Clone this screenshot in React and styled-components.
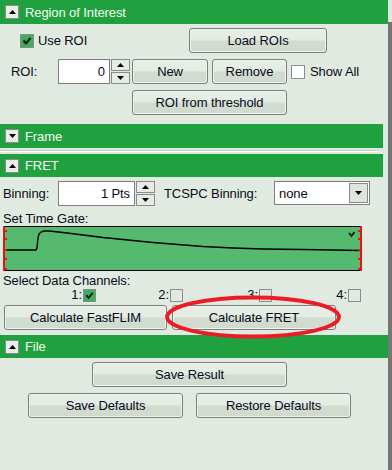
import React from "react";
import styled, { createGlobalStyle } from "styled-components";

const Global = createGlobalStyle`
  html, body { margin: 0; padding: 0; background: #e0eae0; }
  body { font-family: "Liberation Sans", Arial, sans-serif; }
  * { box-sizing: border-box; }
`;

const Window = styled.div`
  width: 392px;
  height: 470px;
  display: flex;
  background: #e0eae0;
  overflow: hidden;
`;

const Panel = styled.div`
  position: relative;
  flex: 1;
  display: flex;
  flex-direction: column;
  font-size: 13px;
  letter-spacing: -0.1px;
  color: #0a0a1a;
`;

const ScrollStrip = styled.div`
  width: 4px;
  display: flex;
  flex-direction: column;
  background: #767676;
  &::before {
    content: "";
    height: 22px;
    background: #e4e4e4;
  }
`;

const Header = styled.div`
  height: ${(p) => p.$h || 24}px;
  margin-top: ${(p) => p.$mt || 0}px;
  margin-right: ${(p) => p.$mr || 0}px;
  background: #20a13f;
  display: flex;
  align-items: center;
  padding-left: 5px;
  gap: 6px;
  color: #f4fff0;
  font-size: 13px;
`;

const Toggle = styled.div`
  width: 14px;
  height: 14px;
  background: #ebebeb;
  border: 1px solid #8a8a8a;
  display: flex;
  align-items: center;
  justify-content: center;
`;

const Row = styled.div`
  display: flex;
  align-items: center;
  height: ${(p) => p.$h || 25}px;
  margin-top: ${(p) => p.$mt || 0}px;
  padding-left: ${(p) => p.$pl || 0}px;
  gap: ${(p) => p.$gap || 0}px;
`;

const Cell = styled.div`
  width: ${(p) => p.$w}px;
  flex: none;
  display: flex;
  align-items: center;
  gap: ${(p) => p.$gap || 0}px;
  padding-left: ${(p) => p.$pl || 0}px;
`;

const Button = styled.div`
  width: ${(p) => p.$w}px;
  height: 25px;
  flex: none;
  border: 1px solid #7c7f7c;
  border-radius: 3px;
  background: linear-gradient(to bottom, #e8efe7 0%, #e4ebe3 48%, #d2dcd1 52%, #d0dacf 100%);
  box-shadow: inset 0 0 0 1px #eef3ed;
  display: flex;
  align-items: center;
  justify-content: center;
  padding-bottom: 1px;
`;

const CheckBox = styled.div`
  width: ${(p) => p.$s || 14}px;
  height: ${(p) => p.$s || 14}px;
  flex: none;
  border: 1px solid #8c8c8c;
  background: ${(p) => (p.$on ? "#3fae5c" : p.$white ? "#ffffff" : "transparent")};
  display: flex;
  align-items: center;
  justify-content: center;
`;

const SpinBox = styled.div`
  display: flex;
  gap: 1px;
  flex: none;
`;

const Field = styled.div`
  width: ${(p) => p.$w}px;
  height: 25px;
  background: #ffffff;
  border: 1px solid #7e7e7e;
  display: flex;
  align-items: center;
  justify-content: flex-end;
  padding-right: 4px;
`;

const SpinButtons = styled.div`
  width: 19px;
  display: flex;
  flex-direction: column;
  gap: 1px;
`;

const SpinBtn = styled.div`
  height: 12px;
  border: 1px solid #8a8a8a;
  background: #e6ece5;
  display: flex;
  align-items: center;
  justify-content: center;
`;

const Select = styled.div`
  width: 96px;
  height: 24px;
  flex: none;
  background: #ffffff;
  border: 1px solid #7e7e7e;
  display: flex;
  align-items: center;
  justify-content: space-between;
  padding: 1px 1px 1px 4px;
`;

const SelectBtn = styled.div`
  width: 19px;
  height: 20px;
  border: 1px solid #8a8a8a;
  background: #dfe5de;
  display: flex;
  align-items: center;
  justify-content: center;
`;

const Separator = styled.div`
  margin: 2px 9px 2px 0;
  height: 2px;
  border-top: 1px solid #c3cbc2;
  border-bottom: 1px solid #ffffff;
`;

const Label = styled.div`
  height: ${(p) => p.$h || 15}px;
  line-height: ${(p) => p.$h || 15}px;
  margin-top: ${(p) => p.$mt || 0}px;
  padding-left: 3px;
`;

const ChartBox = styled.div`
  margin-left: 3px;
  width: 359px;
  height: 45px;
  flex: none;
`;

const Channels = styled.div`
  display: grid;
  grid-template-columns: 96px 87px 89px 89px;
  height: 14px;
  align-items: center;
`;

const Channel = styled.div`
  display: flex;
  justify-content: flex-end;
  align-items: center;
  gap: 1px;
  line-height: 14px;
`;

const CalcRow = styled.div`
  position: relative;
  display: flex;
  gap: 5px;
  margin-top: 3px;
  padding-left: 4px;
  height: 25px;
`;

const Annotation = styled.svg`
  position: absolute;
  left: 163px;
  top: -10px;
  pointer-events: none;
`;

const Center = styled.div`
  display: flex;
  gap: ${(p) => p.$gap || 0}px;
  padding-left: ${(p) => p.$pl || 0}px;
  margin-top: ${(p) => p.$mt || 0}px;
`;

const Up = () => (
  <svg width="7" height="4" viewBox="0 0 7 4">
    <path d="M0 4 L3.5 0 L7 4 Z" fill="#000" />
  </svg>
);
const Down = () => (
  <svg width="7" height="4" viewBox="0 0 7 4">
    <path d="M0 0 L3.5 4 L7 0 Z" fill="#000" />
  </svg>
);
const Tick = ({ s = 14 }) => (
  <svg width={s - 2} height={s - 2} viewBox="0 0 12 12">
    <path d="M2.5 5.5 L5 8.5 L9.5 3" fill="none" stroke="#0a1a0a" strokeWidth="2" />
  </svg>
);

const curve = [
  [1, 24], [33, 24], [34, 22], [35, 12], [36, 8], [38, 6], [41, 5], [46, 5],
  [60, 6.5], [80, 9], [100, 11.5], [125, 14], [150, 16.5], [175, 18.5], [200, 20.5],
  [230, 22], [260, 23], [300, 23.5], [330, 24], [357, 24.5],
];
const ticks = [4, 12, 23, 32, 42];

const Chart = () => (
  <ChartBox>
    <svg width="359" height="45" viewBox="0 0 359 45">
      <rect x="0" y="0" width="359" height="45" fill="#55b96f" />
      <rect x="0.5" y="0.5" width="358" height="44" fill="none" stroke="#000" />
      <polyline
        points={curve.map((p) => p.join(",")).join(" ")}
        fill="none"
        stroke="#000"
        strokeWidth="1.4"
      />
      <path d="M346 7 L348.5 10 L351.5 6" fill="none" stroke="#000" strokeWidth="1.5" />
      <rect x="0" y="0" width="2" height="45" fill="#ee1111" />
      <rect x="357" y="0" width="2" height="45" fill="#ee1111" />
      {ticks.map((t) => (
        <g key={t}>
          <rect x="2" y={t} width="2" height="2" fill="#ee1111" />
          <rect x="355" y={t} width="2" height="2" fill="#ee1111" />
        </g>
      ))}
    </svg>
  </ChartBox>
);

export default function App() {
  return (
    <>
      <Global />
      <Window>
        <Panel>
          <Header>
            <Toggle><Up /></Toggle>
            Region of Interest
          </Header>

          <Row $mt={4}>
            <Cell $w={189} $pl={20} $gap={4}>
              <CheckBox $on><Tick /></CheckBox>
              Use ROI
            </Cell>
            <Button $w={138}>Load ROIs</Button>
          </Row>

          <Row $mt={6}>
            <Cell $w={58} $pl={11}>ROI:</Cell>
            <SpinBox>
              <Field $w={52}>0</Field>
              <SpinButtons>
                <SpinBtn><Up /></SpinBtn>
                <SpinBtn><Down /></SpinBtn>
              </SpinButtons>
            </SpinBox>
            <Cell $w={2} />
            <Button $w={76}>New</Button>
            <Cell $w={4} />
            <Button $w={75}>Remove</Button>
            <Cell $w={4} />
            <CheckBox $white />
            <Cell $w={5} />
            Show All
          </Row>

          <Row $mt={6} $pl={132}>
            <Button $w={155}>ROI from threshold</Button>
          </Row>

          <Header $mt={9} $mr={5}>
            <Toggle><Down /></Toggle>
            Frame
          </Header>
          <Separator />
          <Header $h={23} $mr={5}>
            <Toggle><Up /></Toggle>
            FRET
          </Header>

          <Row $mt={4} $h={24}>
            <Cell $w={58} $pl={3}>Binning:</Cell>
            <SpinBox>
              <Field $w={77}>1 Pts</Field>
              <SpinButtons>
                <SpinBtn><Up /></SpinBtn>
                <SpinBtn><Down /></SpinBtn>
              </SpinButtons>
            </SpinBox>
            <Cell $w={119} $pl={9}>TCSPC Binning:</Cell>
            <Select>
              none
              <SelectBtn><Down /></SelectBtn>
            </Select>
          </Row>

          <Label $mt={6}>Set Time Gate:</Label>
          <Chart />
          <Label $mt={3} $h={14}>Select Data Channels:</Label>
          <Channels>
            <Channel>1:<CheckBox $s={13} $on><Tick s={13} /></CheckBox></Channel>
            <Channel>2:<CheckBox $s={13} /></Channel>
            <Channel>3:<CheckBox $s={13} /></Channel>
            <Channel>4:<CheckBox $s={13} /></Channel>
          </Channels>

          <CalcRow>
            <Button $w={163}>Calculate FastFLIM</Button>
            <Button $w={164}>Calculate FRET</Button>
            <Annotation width="182" height="46" viewBox="0 0 182 46">
              <ellipse cx="90" cy="22" rx="86" ry="19.5" fill="none" stroke="#ec1b24" strokeWidth="3.8" />
            </Annotation>
          </CalcRow>

          <Header $mt={5} $h={23}>
            <Toggle><Up /></Toggle>
            File
          </Header>

          <Center $pl={92} $mt={4}>
            <Button $w={195}>Save Result</Button>
          </Center>
          <Center $pl={28} $mt={6} $gap={13}>
            <Button $w={155}>Save Defaults</Button>
            <Button $w={155}>Restore Defaults</Button>
          </Center>
        </Panel>
        <ScrollStrip />
      </Window>
    </>
  );
}
